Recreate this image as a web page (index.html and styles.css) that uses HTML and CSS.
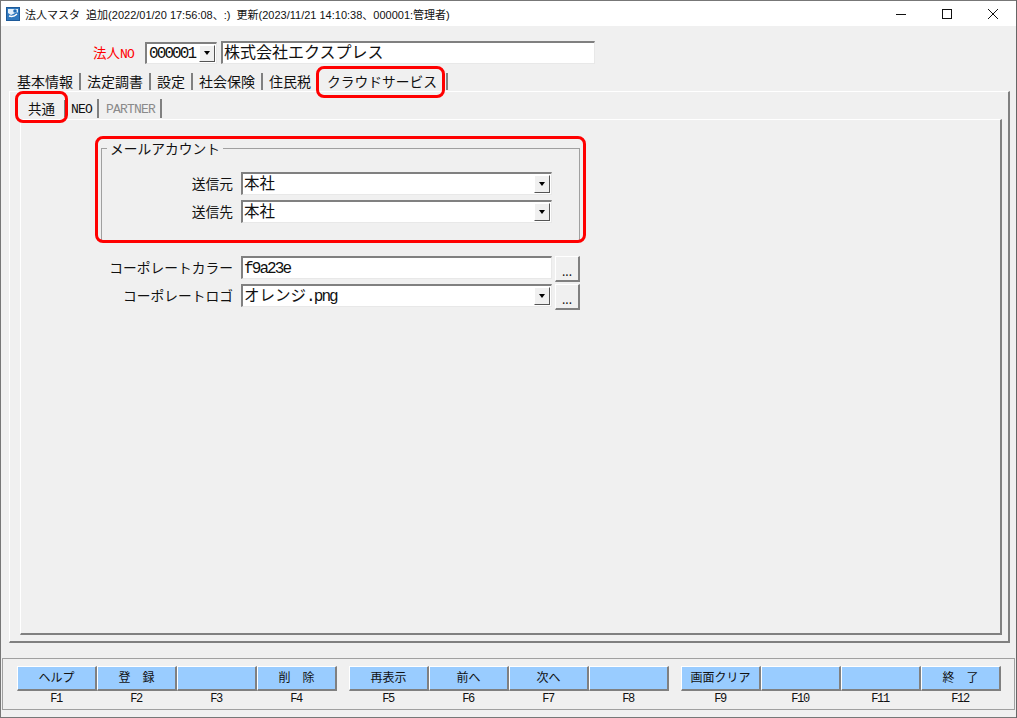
FILE: index.html
```html
<!DOCTYPE html>
<html lang="ja">
<head>
    <meta charset="UTF-8">
    <title>法人マスタ</title>
    <link rel="stylesheet" href="styles.css">
</head>
<body>
    <div class="window">
        <div class="titlebar">
            <svg class="appIcon" width="14" height="14" viewBox="0 0 14 14">
                <rect x="0.5" y="0.5" width="13" height="13" fill="#2f78bd" stroke="#1d5a99"/>
                <rect x="2" y="2" width="10" height="10" fill="#e4f0fa"/>
                <circle cx="9" cy="4" r="1.8" fill="#1f6cb5"/>
                <path d="M2 6 L5 8 L11 5 L12 6 L12 12 L2 12 Z" fill="#2f78bd"/>
                <path d="M3 9 C6 10 9 9 11 7" stroke="#fff" stroke-width="1.4" fill="none"/>
            </svg>
            <div class="titleText">法人マスタ&nbsp; 追加(2022/01/20 17:56:08、:)&nbsp; 更新(2023/11/21 14:10:38、000001:管理者)</div>
            <div class="winButtons">
                <svg width="12" height="12" viewBox="0 0 12 12"><path d="M1 6.5H11" stroke="#111" fill="none"/></svg>
                <svg width="12" height="12" viewBox="0 0 12 12"><rect x="1.5" y="1.5" width="9" height="9" stroke="#111" fill="none"/></svg>
                <svg width="12" height="12" viewBox="0 0 12 12"><path d="M1 1L11 11M11 1L1 11" stroke="#111" fill="none"/></svg>
            </div>
        </div>

        <div class="client">
            <div class="codeRow">
                <span class="codeLabel">法人<span class="narrow">NO</span></span>
                <div class="field codeCombo">
                    <span class="mono">000001</span>
                    <span class="dropButton"></span>
                </div>
                <div class="field nameField">株式会社エクスプレス</div>
            </div>

            <div class="tabs">
                <span class="tab">基本情報</span>
                <span class="tab">法定調書</span>
                <span class="tab">設定</span>
                <span class="tab">社会保険</span>
                <span class="tab">住民税</span>
                <span class="tab tabActive">クラウドサービス</span>
            </div>

            <div class="panel">
                <div class="subTabs">
                    <span class="subTab subTabActive">共通</span>
                    <span class="subTab subTabNeo"><span class="narrow">NEO</span></span>
                    <span class="subTab disabled"><span class="narrow">PARTNER</span></span>
                </div>
                <div class="subPanel">
                    <fieldset class="group">
                        <legend>メールアカウント</legend>
                        <div class="formRow">
                            <label>送信元</label>
                            <div class="field select">本社<span class="dropButton"></span></div>
                        </div>
                        <div class="formRow">
                            <label>送信先</label>
                            <div class="field select">本社<span class="dropButton"></span></div>
                        </div>
                    </fieldset>
                    <div class="plainRows">
                        <div class="formRow">
                            <label>コーポレートカラー</label>
                            <div class="field select"><span class="mono">f9a23e</span></div>
                            <span class="moreButton">...</span>
                        </div>
                        <div class="formRow">
                            <label>コーポレートロゴ</label>
                            <div class="field select">オレンジ<span class="mono">.png</span><span class="dropButton"></span></div>
                            <span class="moreButton">...</span>
                        </div>
                    </div>
                </div>
            </div>

            <div class="fkeys">
                <div class="fkey"><button>ヘルプ</button><span>F1</span></div>
                <div class="fkey"><button>登　録</button><span>F2</span></div>
                <div class="fkey"><button></button><span>F3</span></div>
                <div class="fkey"><button>削　除</button><span>F4</span></div>
                <div class="fkey gapBefore"><button>再表示</button><span>F5</span></div>
                <div class="fkey"><button>前へ</button><span>F6</span></div>
                <div class="fkey"><button>次へ</button><span>F7</span></div>
                <div class="fkey"><button></button><span>F8</span></div>
                <div class="fkey gapBefore"><button>画面クリア</button><span>F9</span></div>
                <div class="fkey"><button></button><span>F10</span></div>
                <div class="fkey"><button></button><span>F11</span></div>
                <div class="fkey"><button>終　了</button><span>F12</span></div>
            </div>
        </div>

        <div class="redBox redTab"></div>
        <div class="redBox redSubTab"></div>
        <div class="redBox redGroup"></div>
    </div>
</body>
</html>
```

FILE: styles.css
```css
* {
    box-sizing: border-box;
}

body {
    margin: 0;
    width: 1017px;
    height: 718px;
    overflow: hidden;
    background-color: #666;
    font-family: "Noto Sans CJK JP", sans-serif;
    color: #111;
}

.window {
    position: relative;
    width: 1016px;
    height: 718px;
    display: flex;
    flex-direction: column;
    background-color: #f0f0f0;
    border-top: 1px solid #777;
    border-left: 1px solid #777;
    border-bottom: 1px solid #777;
}

.titlebar {
    height: 25px;
    flex: none;
    display: flex;
    align-items: center;
    background-color: #fff;
    padding-left: 5px;
}

.appIcon {
    flex: none;
    margin-right: 5px;
}

.titleText {
    font-family: "Liberation Sans", "Noto Sans CJK JP", sans-serif;
    font-size: 11px;
    white-space: nowrap;
}

.winButtons {
    margin-left: auto;
    display: flex;
    gap: 34px;
    padding-right: 17px;
}

.client {
    flex: 1;
    display: flex;
    flex-direction: column;
    padding-left: 8px;
}

/* half width latin, the original font is a narrow gothic */
.narrow {
    font-family: "Liberation Mono", monospace;
    font-size: 13px;
    font-weight: normal;
    letter-spacing: -0.8px;
}

.mono {
    font-family: "Liberation Mono", monospace;
    font-size: 16px;
    letter-spacing: -1.9px;
    margin-top: 4px;
}

.field {
    position: relative;
    display: flex;
    align-items: center;
    background-color: #fff;
    border-top: 2px solid #808080;
    border-left: 2px solid #808080;
    border-right: 1px solid #e8e8e8;
    border-bottom: 1px solid #e8e8e8;
    font-size: 15.5px;
    line-height: 1;
    padding: 0 0 2px 1px;
    white-space: nowrap;
}

.dropButton {
    position: absolute;
    top: 1px;
    right: 1px;
    bottom: 1px;
    width: 16px;
    background-color: #f0f0f0;
    border-top: 1px solid #fff;
    border-left: 1px solid #fff;
    border-right: 1px solid #555;
    border-bottom: 1px solid #555;
}

.dropButton::after {
    content: "";
    position: absolute;
    left: 3.5px;
    top: 50%;
    margin-top: -2px;
    border-top: 4px solid #000;
    border-left: 3.5px solid transparent;
    border-right: 3.5px solid transparent;
}

.codeRow {
    display: flex;
    align-items: center;
    height: 23px;
    margin-top: 15px;
    padding-left: 84px;
}

.codeLabel {
    color: #f00;
    font-size: 13.5px;
    width: 52px;
    padding-bottom: 2px;
}

.codeCombo {
    width: 72px;
    height: 22px;
    margin-right: 4px;
    padding-left: 2px;
}

.nameField {
    width: 374px;
    height: 23px;
    font-size: 16px;
    padding-bottom: 4px;
}

.tabs {
    display: flex;
    align-items: center;
    height: 20px;
    margin-top: 7px;
    padding-left: 2px;
    font-size: 14px;
}

.tab {
    padding: 0 6px;
    line-height: 17px;
    border-right: 2px solid #808080;
    white-space: nowrap;
}

.tabActive {
    padding: 0 9px 0 8px;
    font-size: 13.75px;
}

.panel {
    width: 1001px;
    height: 552px;
    flex: none;
    display: flex;
    flex-direction: column;
    padding: 0 6px 6px 10px;
    background-color: #f0f0f0;
    border-top: 1px solid #fff;
    border-left: 1px solid #fff;
    border-right: 2px solid #808080;
    border-bottom: 2px solid #808080;
}

.subTabs {
    display: flex;
    align-items: center;
    height: 27px;
    padding-top: 5px;
    font-size: 13.5px;
}

.subTab {
    line-height: 17px;
    border-right: 2px solid #808080;
}

.subTabActive {
    padding: 0 9px 0 8px;
}

.subTabNeo {
    padding: 0 5px;
}

.disabled {
    color: #8a8a8a;
    padding: 0 5px 0 7px;
}

.subPanel {
    flex: 1;
    border-top: 1px solid #fff;
    border-left: 1px solid #fff;
    border-right: 2px solid #808080;
    border-bottom: 2px solid #808080;
    padding-left: 80px;
}

.group {
    width: 479px;
    height: 100px;
    margin: 21px 0 0;
    padding: 17px 0 0;
    border: 1px solid #a0a0a0;
    border-bottom: none;
}

.group legend {
    font-size: 13.75px;
    line-height: 14px;
    margin-left: 5px;
    padding: 0 3px;
}

.group .formRow label {
    width: 131px;
}

.formRow {
    display: flex;
    align-items: flex-start;
    height: 28px;
    font-size: 13.75px;
}

.formRow label {
    width: 132px;
    line-height: 22px;
    text-align: right;
    margin-right: 8px;
    white-space: nowrap;
}

.select {
    width: 311px;
    height: 23px;
}

.plainRows {
    margin-top: 15px;
}

.moreButton {
    width: 25px;
    height: 26px;
    margin-left: 3px;
    display: flex;
    justify-content: center;
    align-items: flex-end;
    padding-bottom: 3px;
    font-size: 12px;
    line-height: 1;
    background-color: #f0f0f0;
    border-top: 1px solid #fff;
    border-left: 1px solid #fff;
    border-right: 2px solid #808080;
    border-bottom: 2px solid #808080;
}

.fkeys {
    display: flex;
    height: 52px;
    margin: 15px 0 0 -7px;
    padding: 7px 0 0 14px;
    width: 1013px;
    border: 1px solid #a0a0a0;
}

.fkey {
    width: 80px;
    display: flex;
    flex-direction: column;
    align-items: center;
    font-family: "Liberation Mono", monospace;
    font-size: 12px;
    line-height: 15px;
    letter-spacing: -1.4px;
}

.fkey span {
    padding-right: 2px;
}

.fkey.gapBefore {
    margin-left: 12px;
}

.fkey button {
    width: 80px;
    height: 25px;
    padding: 0 0 2px;
    margin-bottom: 1px;
    font-family: "Noto Sans CJK JP", sans-serif;
    font-size: 12px;
    letter-spacing: 0;
    line-height: 1;
    color: #111;
    background-color: #99ccff;
    border-style: solid;
    border-width: 1px 2px 2px 1px;
    border-color: #fff #808080 #808080 #fff;
}

.redBox {
    position: absolute;
    border: 3px solid #f00;
    border-radius: 8px;
}

.redTab {
    left: 315px;
    top: 65px;
    width: 129px;
    height: 32px;
}

.redSubTab {
    left: 14px;
    top: 90px;
    width: 53px;
    height: 32px;
}

.redGroup {
    left: 94px;
    top: 135px;
    width: 491px;
    height: 107px;
}
```
